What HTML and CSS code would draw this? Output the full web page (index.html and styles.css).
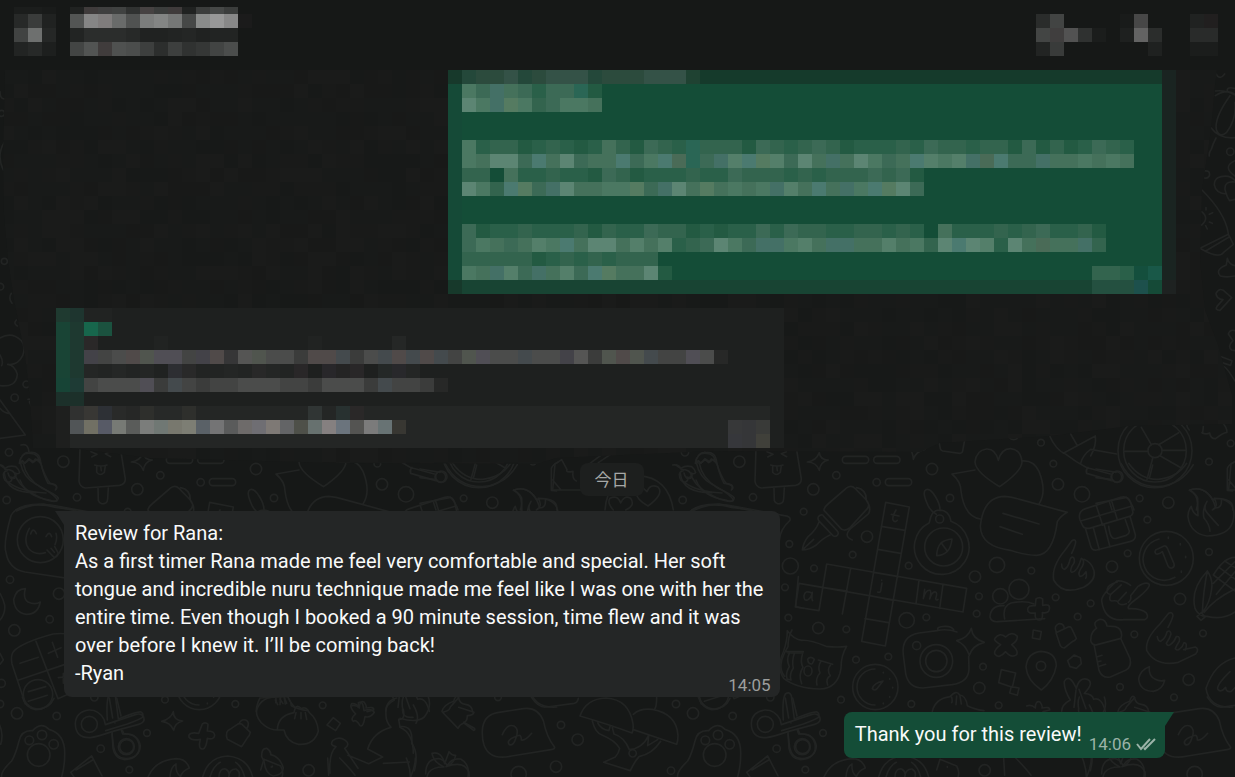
FILE: index.html
```html
<!DOCTYPE html>
<html lang="ja">
  <head>
    <meta charset="UTF-8" />
    <meta name="viewport" content="width=device-width, initial-scale=1.0" />
    <title>Chat</title>
    <link rel="stylesheet" href="styles.css">
  </head>
  <body>
    <div class="chat">
      <!-- doodle wallpaper, repeats every 676px (2028 units) -->
      <svg class="wallpaper" aria-hidden="true">
        <g transform="scale(0.33333)">
          <g id="tile">
            <!-- right block -->
            <g transform="translate(2340 1260)">
              <g id="dotsRight"></g>
              <path d="M118 98q2 22 27 22q-24 5-27 31q-8-24-36-25q26-3 36-28z" />
              <rect x="187" y="109" width="79" height="21" rx="10" />
              <rect x="281" y="109" width="79" height="21" rx="10" />
              <rect x="316" y="176" width="79" height="21" rx="10" />
              <path d="M384 84q15 9 16 34q8-25 35-30M478 70l3 16q1 5 7 7l51 7q8 0 9-7l6-33" />
              <!-- pen -->
              <path d="M132 268q3-9 12-16l57-49q13-9 24 2l34 35q12 13 3 26l-52 57q-12 11-25 5l-53-57zM128 285q-9-2-13 6q-3 7 3 13l41 43q7 5 13-1q6-6-1-14l-40-43zM117 306q-9 25-32 43q-15 19-18 41q20 0 42-15q19-20 41-30M68 389l33-31M230 203q30 6 29 38q16 22 7 40l-43 36q-40 30-6 43" />
              <!-- crossword -->
              <path d="M317 247l71 14l-72 417l-71-14zM304 319l71 12M293 388l69 12M255 596l71 12M57 490l492 86l11-71l-420-73l-23 140M57 490l-11 71l71 11M57 490l76 13M212 445l-25 137M202 513l-70-10M281 457l70 12M269 527l72 14M417 481l-9 70M489 494l-10 71" />
              <path d="M348 270q-15 26-7 33q6 4 11-2M334 283l23 5M95 519q-20-10-23 8q-1 18 12 12q11-7 13-22q-3 20 1 25M306 489l-4 24q-2 6-9 3M305 480v1M434 508l-4 28q7-28 20-25q5 3-1 26q7-24 18-21q6 3 0 20q2 7 7 2" />
              <!-- compass -->
              <circle cx="491" cy="381" r="57" />
              <circle cx="479" cy="297" r="12" />
              <path d="M448 308a82 82 0 1 0 65 -4q-6-34-35-34q-24 0-30 38zM469 283q-15-7-25-27q-19-41-6-47q13-5 29 22q14 23 13 41M470 407q1-25 13-38q12-10 33-12q-3 26-14 37q-12 12-32 13M484 369l18 25" />
              <!-- heart and chat clouds -->
              <path d="M659 200q-72-43-74-74q4-35 34-39q27-2 36 34q10-36 37-35q31 3 34 40q-1 28-67 74zM585 150l-69 12q27 23 27 51q10 77 58 84M726 123q35-3 51 31q24 60 1 96M601 319q9-89 73-90q21 1 48 10l140 38q-19 10-30 28q-13 100-62 101q-31 0-79-15q-88-11-90-72zM669 280l108 32M660 320l67 23" />
              <!-- backpack -->
              <path d="M900 300q-8-26 17-34l105-34q23-6 30 15l7 31q-2 10-13 12l-118 35q-16 2-20-8zM902 303l154-45M949 257l19 59M995 243l17 56M917 328l15 50q4 15 18 12l102-26q16-4 14-20l-16-55M940 323l18 66M973 315l17 66M986 319q3 25 10 33q4 5 13 3l30-9q12-7 8-16l-11-31" />
              <!-- rocket and wheel -->
              <path d="M806 42q22 50 52 61q27 21 64 41M850 100l96-52q4 28-14 60M872 42l20 35M902 130q6-25 30-42l78 14M925 144l66 18M920 160q-4-10 4-18M920 160l75 22" />
              <circle cx="1009" cy="171" r="16" />
              <circle cx="1125" cy="92" r="111" />
              <circle cx="1125" cy="92" r="94" />
              <circle cx="1125" cy="92" r="21" />
              <path d="M1104 94h-71M1146 91h72M1114 74l-30-52M1136 74l60-36M1119 112l-18 66M1140 107l63 36" />
              <path d="M1270 20q-2 24-4 18q12 7 23 1q3 18 18 17q20-17 34-19q0-16-16-31M1228 30q-10-11-7-20M1342 145v66l16 2M1342 145q5-12 20-18" />
              <!-- flame -->
              <path d="M1228 211q31-12 55 9q19 20 24 44q20 0 17-27q50 13 34 70q-13 40-77 41q-50-8-57-57q-1-17 10-32q4 22 20 28q-1-34-1-53q-7-15-25-23zM1281 244q-12 20 0 34q22 26 34 38M1281 244q-15 25-9 50q17 20 18 40" />
              <!-- hands -->
              <path d="M855 391l20-28q10-8 12 2q0 10-12 35M855 391q-41 49-34 89q26 47 90 22q38-21 31-50q-7-25-30-34M845 432q0 15 9 16q10-6 14-21q3-20 13-14q7 10-5 25q-7 17-1 19q17 0 29-42q12 6 3 24q-16 22-7 30q9 1 18-14q3 15-1 20" />
              <path d="M1052 496q-21-15-41-13q-46 41-46 59q8 64 67 57h62q14-6 5-20q-17-15-53-13q-8-7 27-32q37-30 35-41q-10-10-35 7l-21 27q3 13-7 20M1012 486q-28 8-30 20q-5 17 10 17q-7 19 3 20q15-2 18 2q5 14 26 6M994 522l30-27M1015 543l24-26" />
              <path d="M1140 612l26-32q12-6 13 7q-3 14-15 35M1140 612q-45 44-40 79q28 50 95 36l52-25q12-14-1-21l-35 8M1132 650q2 14 10 14q14-8 19-28q10-8 12 6q-4 14-14 28q4 10 12 4q12-8 18-24q12-3 9 14q-8 12-12 22q6 8 14 0q8-6 12-18q12 0 4 22" />
              <circle cx="1159" cy="415" r="81" />
              <path d="M1137 357a63 63 0 1 0 48 115M1127 390l25-12q6-1 10 6l20 47q3 9-6 13q-8 2-12-6l-17-43q-13 11-20 6q-4-6 0-11M1165 351v4M1201 371v4M1217 409v4M1204 453v4" />
              <!-- corn -->
              <path d="M1282 453q-51 54-37 112q11 25 36 24q49 12 84-13M1282 453q17 24 13 54q-5 42-28 71q3-65 15-125M1300 465q33-54 65-53M1273 577q29-40 92-70M1300 465l65 48M1318 443l47 34M1334 423l31 20M1309 523l56-68M1300 490l65-65M1251 589l13-11l11 13l-12 10z" />
              <!-- people -->
              <circle cx="661" cy="529" r="23" />
              <circle cx="717" cy="508" r="30" />
              <path d="M672 557q-40-2-42 34q4 16 24 14l140-9M674 597q-8-37 19-48q43-9 69 3" />
              <path d="M768 537q10-8 20 0v19q24-6 20 12q-2 13-21 10q3 23-10 22q-14-1-11-21q-23 3-23-10q0-14 23-12z" />
              <!-- camera -->
              <circle cx="469" cy="723" r="49" />
              <circle cx="469" cy="723" r="32" />
              <circle cx="410" cy="677" r="12" />
              <path d="M531 636q-28-10-57-5q-6-11 20-12q21-1 27 10M472 632l-55 7q-54 9-47 66l7 55q8 44 52 44l87-10q50-7 51-47l-1-38M574 625q3 31 39 42q-37 10-45 39q-12-34-38-44q35-8 44-37z" />
              <!-- cat -->
              <path d="M22 632q20 27 44 29q24-2 72 18q36 4 62 0q-17 27-17 66q-9 60-63 62q-72-2-109-32q-22-33-1-79q12-34 12-64zM24 699h45M83 718q8-12 20 0q-6 15-10 14q-9-2-10-14M115 720l43 13M43 700q-8 26-3 44q-13 20-7 36l-12-3M67 704q-7 22 2 38q-15 23-4 49M122 725q-10 18-2 34q-14 15-9 36M152 734q-13 16-1 33q-15 8-8 28" />
              <ellipse cx="84" cy="753" rx="12" ry="15" />
              <!-- gauge -->
              <circle cx="286" cy="801" r="68" />
              <path d="M285 747a54 54 0 1 0 0 108M309 783q-28 6-32 23q7 8 14 0zM310 757v2M329 776v2M338 802v2M329 830v2M310 849v2" />
              <path d="M645 655q13-19 32-4q19-19 35-2q1 14-17 25q21 18 15 30q-16 12-33-9q-20 23-32 8q-6-10 17-29q-23-13-17-19zM760 630l24 5l-4 23l-23-4zM664 749l43 10l-10 43l-41-14zM694 800l23 4l-5 22l-23-7zM883 705l18 8l3 18l-15 14l-19-5l-7-18z" />
              <path d="M783 694q45 3 46 43q-8 46-45 73q-43-29-46-69q4-43 45-47z" />
              <circle cx="783" cy="738" r="14" />
              <path d="M828 638l38-18q7 0 9 5l14 30q-3 7-12 10l-24 19q-8 0-12-7zM829 637q-9-19 7-26q16-1 17 15" />
              <!-- bottle -->
              <path d="M949 624q-12-17 7-25q20-4 25 19l25 2q18 4 19 26l-2 9l-80 21q-14-8-10-22q0-17 17-30zM942 673l15 78q10 25 34 20l46-20q19-10 13-36l-27-58M950 711l16-5M954 725l9-2M958 739l19-6" />
              <path d="M1108 740q-28 10-32 37q4 37 44 37q28-5 34-33q-15 4-28-3q-21-9-18-38z" />
              <path d="M1365 714q-61 14-87 91q9 60 80 56M1350 755q-39 38-37 52q8 13 24-5q1 16 17 12l14-14" />
              <!-- dumplings and bow -->
              <path d="M457 874q9-38 53-44q19-22 29-5q19 2 23 32q18 10 50 15M515 832q3 12 0 16M530 828l-2 26M540 828l4 24M740 858q14-6 26 6q0-23 14-18q9 12 6 18q25-5 23 6l-20 5M845 874q0-20 26-34q-20-33-18-56q16-25 36 22q8-35 33-28q22 10-9 42q25 2 28 18q24-8 35 36M888 810l-6 52M897 808l21 58M1014 874q6-20 35-30q6-21 14-13q4 21 21 22q20 2 22 22" />
              <!-- clothespin -->
              <path d="M10 900q-4-60 6-78q12-9 18 5l9 70q60-24 68-21q9 5 4 16q-5 5-45 20l-65 20M24 935l3 50q6 32 35 34q45-3 44-40q-4-41-50-37l-4-12" />
              <circle cx="67" cy="980" r="24" />
              <path d="M132 1071q22-51 85-55q29 0 39 28q-21 8-27 27M198 1071q2-31 18-39q-2 25 12 36M296 1071q16-60 75-63q61 5 75 63M318 1071q10-34 31-44M395 1027q19 13 27 44M345 1071q0-26 20-24q15 10 9 24q3-25 22-24q14 8 9 24" />
              <path d="M470 1050l10-32l50 20q10 18 4 33M502 1040v2M671 1014l3 52M707 1014q30 30 46 52M907 1014q12 30 12 57M934 1014q0 26-14 57M965 1062q0-46 38-46q16 0 27 22q11-25 40-21q28 15 22 54" />
            </g>

            <!-- left block -->
            <g transform="translate(0 1320)">
              <g id="dotsLeft"></g>
              <!-- chilli -->
              <path d="M63 15q22-7 24 23q33-5 35 30l-16-11l-8 11l-11-10q-10 15-22 10q-9-5 2-20q7-10 15-10M70 70q8 44 53 73q45 20 52 31q-3 16-26 6q-70-10-89-60M122 68q11 39 28 62q30 7 16 20M0 75q10 8 15 10q13-10 32-5q10 8 12 18q-4 6-14 1q7 8-2 16q-14 5-19-16M13 100q6 59 95 58" />
              <!-- popsicle -->
              <path d="M240 24l-3 100q3 17 19 20l103-8q17-4 17-19l-15-93M294 145l1 37q6 14 22 7q6-4 6-13l2-32M273 35l18 8l-16 8M331 35l-15 6l16 9M284 75q20 6 37 0M290 78v19q10 13 23 0l3-20M302 78l2 14" />
              <!-- smiley -->
              <circle cx="121" cy="299" r="69" />
              <path d="M88 265q-20 37-1 62q20 20 49 11M168 280q5 16-3 34M92 282q7-23 17-1M138 290q10-20 17 0M141 330l22 23q12-5 11-15l-10-18M153 325l10 12M230 213l-99-21q-80-2-98 35q-24 84-15 110q8 50 57 59l175 26" />
              <path d="M76 446q-27 0-35 32q2 40 38 45q35 0 42-37q-16 10-37 0q-16-11-8-40zM0 460q11 20 14 35q3 25-14 45M0 640l10 20l-10 13" />
              <!-- board -->
              <path d="M220 585q-30-7-61-3q-95 26-118 52q-10 12-5 38l40 120M108 604l66 172M56 720l137-46M174 776l30-13M60 670l55-18M157 607l16 45M145 640l38-17M85 755l52-15M85 784l57-18M175 713l18-2M190 700v30" />
              <circle cx="114" cy="763" r="44" />
              <!-- paw -->
              <path d="M5 1011q-4-16 30-48q12-20 22-60q7-33 41-31q26-28 49-4q50 14 47 78q0 33-9 65" />
              <circle cx="88" cy="901" r="13" />
              <circle cx="126" cy="885" r="14" />
              <circle cx="161" cy="913" r="14" />
              <circle cx="116" cy="945" r="34" />
              <!-- clothespin -->
              <path d="M312 838q-16-29-45-28q-39 5-41 40q0 45 45 43q18-2 65-18l80-22q21-6 15-22q-7-13-25-7l-90 30zM328 774l10 60M350 774l13 54M336 882l5 40q7 34 37 34q41-3 43-38q-6-38-49-36l-6-13M345 848v1" />
              <circle cx="268" cy="853" r="24" />
              <circle cx="380" cy="920" r="21" />
              <path d="M212 997l63-49l31 60M212 997l10 14M228 990l50-30" />
            </g>

            <!-- middle block -->
            <g transform="translate(1200 1500)">
              <path d="M131 636q19-5 20-15l25-28M176 622l46 15q-3 10-20 10q0 17-11 20l32 18q4 5-2 6l-29-22q-13 4-18 16l-47-49" />
              <!-- bubble with a signature -->
              <path d="M247 692q2-46 45-54l78-12q43-6 60 36q10 50 34 80q0 6-11 7l-118 19q-66 15-83-33q-6-18-5-43zM307 704q15-34 35-26q16 9 6 35q-7 25-20 21q-13-15 30-28q6 0 6 14q12 3 31-20" />
              <!-- mushrooms -->
              <path d="M540 648q18-52 78-54q69 4 81 77q2 19-3 28q-70-26-156-51zM700 643q20-19 57-15q73 13 77 78q0 18-4 27l-130-44M577 663q9 36 29 42q40 17 53 40q-3 15-13 26l-35 16l80 25q10-23 26-42q40-8 65-46M593 669q10 20 34 23l3-12M637 683l5 19q31 9 46 47q40-4 58-43M746 708l-3 29l30-18M770 592q0 30-7 37" />
              <path d="M394 591q22 34 47 30l82-11q10-3 12-15M895 591q9 32 40 38q41-2 55-34M0 680q40-6 35 50q22 30 8 82M10 591q-6 13-2 35q-4 29 31 26M0 655q50 15 73-4q23-30 12-60M48 670q12-20-8-55" />
              <path d="M96 760q28-8 38 31l13-36q9 12 20 11q-5 26-29 34q54-20 69 16q3 20-10 50H85q-20-66 47-65q-32-15-36-41z" />
              <path d="M877 33q60-30 126-14l150 28q20 2 17 14q-30 27-32 60" />
              <path d="M1176 390q-12 20-12 50q-37 60-10 89M1210 455h-50M1168 460q-10 18 0 40q-12 20-7 35M1195 230l-8 90l25 5" />
            </g>
            <g transform="translate(1260 900)">
              <path d="M758 495q20-3 25 13q30 0 31 20q-4 7-14 3q8 10-4 15q-17 1-18-23q4-11 12-11M826 490q4-33 33-30q25 0 30 30l-10-12l-10 8l-14-10l-12 14l-8-8zM790 545q38 30 116 34M829 488q9 45 47 65q70 38 62 50q-13 5-48-10q-54-22-75-62M890 488q9 38 22 62q31 0 24 17M398 570l7-78l20-13l16 30q-5 10 18 5q-3 24 10 29M398 570h90M398 540l25 30M510 490l54-40M535 488l55-37" />
              <path d="M555 630q8-103 100-103q90 5 105 103M580 630q-20-22-10-35q23-12 32 14q10-25 30-14q15 22-15 35M684 618q-39-23-35-44q15-20 32 1q10-25 33-14q20 20-30 57zM281 570q44-15 70 30q3-2 5-5q60 0 54 35M281 570q33 20 20 60M355 595q14 25-6 35M0 610l92-18q17 20 22 38M40 605l8 25M815 630q54-26 120-8l60 8" />
              <path d="M75 490q35 70 112 70q70-5 105-66M98 490q35 50 89 48q56-5 85-48M160 535l10-40M0 507l60 10M0 533l44 5" />
              <circle cx="64" cy="530" r="17" />
            </g>
          </g>
          <use href="#tile" x="-2028" />
          <use href="#tile" x="2028" />

          <!-- only shows left of the second tile -->
          <g transform="translate(0 1320)">
            <path d="M520 815q0 25 28 28q-24 6-27 28q-9-24-36-27q28-8 35-29zM607 852q10-7 17 1l-2 20q22 0 22 13q-2 15-22 9q-3 29-13 32q-16 1-8-29q-26 5-34-6q-4-17 29-12zM690 868l22-15q7-4 14 0l25 24q-2 10-8 15l-18 28l-43-22q-8-24 8-30zM717 852q6-16 20-12q14 6 4 26" />
            <path d="M780 774q-27 52 13 82q18 14 39 14M780 774l85-5q-4 7 22 36M832 870q1-43 50-52q5-30 22-12q15-8 24 12q24 19 27 55q-12 43-60 40q-36-8-43-43zM826 780l7 14M840 777l9 14M854 775l6 15M888 818l-4 18M903 818v18M916 818l4 20" />
            <path d="M1000 833l21 17l-14 22l-26-17zM1075 788q14-8 17 24q23-8 31 5q-12 18-28 13q-5 33-15 27q-11-20-20-13q-10-7 7-22q-20-20-12-31q13-2 22 11zM1190 774q-36 8-32 50q-1 20 15 38q-54 14-70 65l45 24l-42 20l-62-25M1240 940q0-60-40-78l-4-24q20 4 14-30M1150 970l78-4M990 1000q-4-60 18-80q-20-4-10-18q18-15 38-1q16 12-2 24l40 60M785 950q-1-26 15-25q14 9 12 19q28 6 38 40q-1 20-30 24q-24-6-28-45zM817 978v2" />
          </g>

          <!-- right edge beside the upper messages -->
          <g transform="translate(2400 180)">
            <path d="M1248 42q12 20 26 0M1246 93q29-4 59 12M1246 107q35-22 59-4M1283 95q-6-16 20-10M1290 107q-50 70-40 105q10 22 30 5q30-40 25-90M1233 203q25 34 72 30M1248 234q-10 19-14 34q-8 10-6 20M1243 375q0-30 42-26q10 2 20 12M1243 375q4 26 37 27M1305 366q-32-4-30 22q6 24 14 34l16-4M1206 390q70 70 79 130M1200 565l85-42q6 10 15 30l-30 25q-15 20-70-13M1216 574l70-42M1205 455q24 20 0 40M1218 443v7M1238 458l-10 5M1237 490l-9-4M1222 507l-5-10M1282 595l-3 20q-35 14-18 33q20 5 44 0M1282 595q6 20 23 22M1248 700q12-22 30-2l17 15l-35 38q-16 0-9-12l18-20q-20-2-21-19zM1305 302q-40 18 0 46" />
            <circle cx="1291" cy="275" r="11" />
            <path d="M1214 333q18-2 14 15q-5 8-14 6M1305 812q-15-5-20 10l14 20q-18 18-4 28l10 2M1264 890l32 12l-4 14l-26-8M1268 918q10 0 37 45" />
          </g>
          <!-- left edge beside the quoted message -->
          <g transform="translate(0 180)">
            <path d="M0 95q0 22 14 22M14 245q-26 40-4 85M0 834q35-20 64 8q14 15 4 45q-15 30-45 26q20 1 29 30q-3 40-52 34M0 885q11 20 5 32M0 1020l76 105l-76 10M0 1045q12 14 26 15M34 700q-10 15 2 30M49 780q-10 10 3 18M84 1018l14-2l-10 10l10 20" />
            <circle cx="5" cy="160" r="9" />
            <circle cx="13" cy="604" r="9" />
            <circle cx="1" cy="680" r="10" />
            <circle cx="79" cy="973" r="10" />
            <circle cx="44" cy="1013" r="11" />
          </g>
        </g>
      </svg>
      <svg class="veil" id="veil" aria-hidden="true"></svg>

      <header class="top-bar">
        <svg class="mosaic avatar" id="avatar" aria-hidden="true"></svg>
        <svg class="mosaic contact" id="contact" aria-hidden="true"></svg>
        <nav class="actions">
          <button type="button" aria-label="Call"><svg class="mosaic" id="call"></svg></button>
          <button type="button" aria-label="Search"><svg class="mosaic" id="search"></svg></button>
          <button type="button" aria-label="Menu"><svg class="mosaic" id="menu"></svg></button>
        </nav>
      </header>

      <main class="messages">
        <svg class="mosaic sent-hidden" id="sentHidden" aria-hidden="true"></svg>
        <svg class="mosaic received-hidden" id="receivedHidden" aria-hidden="true"></svg>

        <div class="date">今日</div>

        <article class="bubble received">
          <p>Review for Rana:<br>
            As a first timer Rana made me feel very comfortable and special. Her soft tongue and incredible nuru technique made me feel like I was one with her the entire time. Even though I booked a 90 minute session, time flew and it was over before I knew it. I’ll be coming back!<br>
            -Ryan</p>
          <time>14:05</time>
        </article>

        <article class="bubble sent">
          <p>Thank you for this review!</p>
          <div class="meta">
            <time>14:06</time>
            <svg class="ticks" viewBox="0 0 20 13" aria-hidden="true">
              <path d="M1 6l4 5l9-10M8 10l1 1l10-10" />
            </svg>
          </div>
        </article>
      </main>
    </div>
    <script src="script.js"></script>
  </body>
</html>
```
FILE: styles.css
```css
* {
  box-sizing: border-box;
}

body {
  margin: 0;
  background-color: #161817;
  color: #f9fafa;
  font-family: Roboto, "Noto Sans CJK JP", sans-serif;
  font-size: 20px;
  line-height: 28px;
}

.chat {
  position: relative;
  min-height: 100vh;
  overflow: hidden;
}

/* Wallpaper */
.wallpaper,
.veil {
  position: absolute;
  top: 0;
  left: 0;
  width: 100%;
  height: 100%;
}

.wallpaper {
  fill: none;
  stroke: #222423;
  stroke-width: 5;
  stroke-linecap: round;
  stroke-linejoin: round;
}

/* Header */
.top-bar {
  position: relative;
  display: flex;
  align-items: flex-start;
  height: 70px;
  padding: 7px 17px 0 14px;
  background-color: #161817;
}

.mosaic {
  display: block;
  flex: none;
}

.contact {
  margin-left: 14px;
}

.actions {
  display: flex;
  gap: 14px;
  margin-left: auto;
}

.actions button {
  padding: 0;
  border: 0;
  background: none;
  cursor: pointer;
}

/* Messages */
.messages {
  position: relative;
  display: flex;
  flex-direction: column;
  align-items: flex-start;
  gap: 15px;
  padding: 0 70px 19px 64px;
}

.sent-hidden {
  align-self: flex-end;
  margin-right: -11px;
  margin-bottom: -1px;
}

.received-hidden {
  margin-left: -8px;
}

.date {
  align-self: center;
  margin-right: 6px;
  padding: 2px 15px 3px;
  border-radius: 8px;
  background-color: #1d1f1e;
  color: #a6a8a7;
  font-family: "Noto Sans CJK JP", sans-serif;
  font-size: 17px;
}

.bubble {
  position: relative;
  max-width: 65%;
  padding: 8px 9px 10px 11px;
  border-radius: 8px;
}

.bubble p {
  margin: 0;
}

.bubble time {
  color: #9c9e9d;
  font-size: 17px;
  line-height: 20px;
}

.bubble::before {
  content: "";
  position: absolute;
  top: 0;
  width: 18px;
  height: 14px;
  background-color: inherit;
}

.received {
  display: grid;
  border-top-left-radius: 0;
  background-color: #242626;
}

.received::before {
  left: -9px;
  clip-path: polygon(0 0, 100% 0, 100% 100%, 9px 100%);
}

/* The time shares the cell of the text, in its lower right corner */
.received p,
.received time {
  grid-area: 1 / 1;
}

.received time {
  place-self: end;
  margin-bottom: -8px;
}

.sent {
  display: flex;
  align-items: flex-end;
  align-self: flex-end;
  gap: 7px;
  border-top-right-radius: 0;
  background-color: #144d37;
}

.sent::before {
  right: -9px;
  clip-path: polygon(0 0, 100% 0, 9px 100%, 0 100%);
}

.meta {
  display: flex;
  align-items: center;
  gap: 5px;
  margin-bottom: -6px;
}

.sent time {
  color: #9bb3a8;
}

.ticks {
  width: 20px;
  height: 13px;
  fill: none;
  stroke: #9bb3a8;
  stroke-width: 2;
}
```
FILE: script.js
```javascript
const CELL = 14;
const SVG_NS = "http://www.w3.org/2000/svg";

const green = {
  a: "#235a42", b: "#2a6049", c: "#33644e", d: "#3c6a56", e: "#45715b",
  f: "#4b7862", g: "#547f6a", h: "#5c8573", m: "#4a6b57", o: "#557b61",
  s: "#447066", t: "#4b7a70", u: "#2a6655",
  k: "#153a2b", 0: "#17392b", 1: "#154a37", 2: "#184433", x: "#1a2421",
  y: "#1e2221", A: "#24483a", B: "#2c4b3d", C: "#345247", D: "#1f4232",
  E: "#144f3d", F: "#195848", G: "#1d504c", H: "#245040",
};

const grey = {
  1: "#272827", 2: "#303130", 3: "#3b3c3b", 4: "#434443", 5: "#4b4c4b",
  6: "#555554", p: "#434248", r: "#504a49", v: "#50554e", y: "#504e55",
  q: "#444a4d", n: "#363637",
};

// A row is one letter for each cell, or colours with spaces between them
const mosaics = {
  avatar: {
    top: 7, cols: 3, rows: [
      "#1b1d1c #1b1d1c #191b1a", "#272928 #3a3c3b #202221",
      "#414342 #6e706f #252726", "#222423 #272928 #1d1f1e",
    ],
  },
  contact: {
    top: 7, cols: 13, rows: [
      "#202221 #3f3b3b #3f3f3f #404241 #303231 #464242 #3b3d3c #3f3b3b #202221 #3b3d3c #464847 #3b3d3c",
      "#535554 #858585 #7f7c7c #696b6a #505251 #7b7d7c #838584 #757776 #464847 #898b8a #989898 #888888 #1b1b1b",
      "#222423 #2b2d2c #2b2d2c #2b2d2c #272928 #202221 #202221 #222423 #242625 #202221 #222423 #222423",
      "#434544 #525453 #403c3c #4f5150 #4b4d4c #3d3f3e #2c2e2d #3d3f3e #303231 #353736 #424443 #4b4d4c",
    ],
  },
  call: {
    top: 7, cols: 5, rows: [
      ".....", "#2a2c2b #424443", "#434544 #403e3e #525252 #2f3130 #1b1d1c", "#222423 #393b3a",
    ],
  },
  search: {
    top: 7, cols: 4, rows: [
      "....", "#191b1a #474747", "#1e201f #636363 #2b2d2c", ". . #1f2120",
    ],
  },
  menu: {
    top: 7, cols: 2, rows: [
      "..", "#202221 #211f1f", "#292b2a #292b2a", "#1b1d1c #1b1d1c",
    ],
  },
  sentHidden: {
    cols: 52, palette: green, base: "#144d37", rows: [
      "0ABBCABCCCABBBCCCD" + "k".repeat(33) + "x",
      "1fdsedbddua" + ".".repeat(40) + "x",
      "1hfsofcdffe" + ".".repeat(40) + "x",
      "1" + ".".repeat(50) + "x",
      "1" + ".".repeat(50) + "x",
      "1fbccabcbabecadcbucccadcbcdcabbbcbdccbccadacabdcb..x",
      "1fehhdtehdeetdftmudsgtogdhesehfdetgfgsmtddseefefe..x",
      "1cc.ebbcbbadcabbbcbbdcccbcbcccdcda" + ".".repeat(17) + "x",
      "1hfctodsheeffodsheoefefsgetesftohd" + ".".repeat(17) + "x",
      "1" + ".".repeat(50) + "x",
      "1" + ".".repeat(50) + "x",
      "1dabbcbbbcacbbdccababbdbdccbbccbcb.ebbbcbcdbbca....x",
      "1dfedegftehhegegbcdhfdssfgesseegefchthgbhemeesc....x",
      "1cccccabcbcbccc" + ".".repeat(36) + "x",
      "1fesgdsegdtoeeha" + ".".repeat(30) + "ccbEFx",
      "0" + "2".repeat(45) + "HHHG1y",
    ],
  },
  receivedHidden: {
    cols: 52, palette: grey, base: "#1e201f", rows: [
      "#1f3a30 #1e352f #212322 #212322",
      "#194435 #1e3930 #17664c #1b523f",
      "#194435 #1e3930 #2a2828 . . . . #212322 . . . . . . . . . . #212322 . . . . . #252726",
      "#194435 #1e3930 p 4 5 r v y y 4 p r n 6 v 5 5 3 r r q 3 5 q r q r q 4 v y 5 5 q 5 5 p 6 3 v r v q 4 4 y 5 1",
      "#194435 #1e3930 #242625 #222423 #252726 #222423 #242625 #202221 #2d2e32 #292929 #222423 #222423 #242625 #222423 #282828 #242625 #222423 #292728 . #28272a #242424 #292728 . #242827 #28282b #242625",
      "#174436 #1e3b35 4 5 5 5 y 3 q 4 3 4 4 5 5 5 4 4 3 5 5 5 3 q 4 4 3 1",
      "#1c302a #1c302a",
      "#1e1f1e #303130 #383734 #2d3035 #292a29 #262726 #2e2f2c #272928 #272928 #2e2f2c" + " #242625".repeat(8) + " #303534 #242625 #283130 #2a2828" + " #242625".repeat(29),
      "#1e1f1e #515557 #717064 #575a66 #777a75 #5a5c5a #7b7d7b #707874 #78786e #7d7e74 #5a6167 #747475 #5a5b5b #6e6b6a #6f6e73 #7e7975 #636466 #4e5049 #67716f #858080 #6b747d #545452 #7b7b7b #687374 #383732" + " #242625".repeat(23) + " #373839 #353638 #393a38",
      "#1e1f1e" + " #242625".repeat(47) + " #36373b #353638 #40403a",
    ],
  },
};

function addRect(parent, x, y, width, height, fill) {
  const rect = document.createElementNS(SVG_NS, "rect");
  rect.setAttribute("x", x);
  rect.setAttribute("y", y);
  rect.setAttribute("width", width);
  rect.setAttribute("height", height);
  rect.setAttribute("fill", fill);
  parent.appendChild(rect);
}

Object.entries(mosaics).forEach(([id, { cols, rows, palette = {}, base, top = 0 }]) => {
  const svg = document.getElementById(id);
  const width = cols * CELL;
  const height = rows.length * CELL - top;
  svg.setAttribute("width", width);
  svg.setAttribute("height", height);
  svg.setAttribute("viewBox", `0 ${top} ${width} ${height}`);
  svg.setAttribute("shape-rendering", "crispEdges");

  if (base) {
    addRect(svg, 0, 0, width, height, base);
  }
  rows.forEach((row, y) => {
    const cells = row.includes(" ") ? row.split(" ") : [...row];
    cells.forEach((cell, x) => {
      if (cell !== ".") {
        addRect(svg, x * CELL, y * CELL, CELL, CELL, palette[cell] || cell);
      }
    });
  });
});

// Faint squares behind the hidden messages
const veil = document.getElementById("veil");
veil.innerHTML = `
  <clipPath id="veilShape">
    <polygon points="5,70 3,160 4,215 8,260 14,300 25,355 30,400 33,448 70,448 150,458
      340,463 537,464 556,458 714,451 920,452 940,443 1050,436 1130,426 1232,424
      1232,395 1218,345 1205,310 1200,260 1202,190 1211,130 1215,85 1217,70" />
  </clipPath>
  <g clip-path="url(#veilShape)" shape-rendering="crispEdges"></g>`;
const veilCells = veil.querySelector("g");
const shades = ["#171918", "#181a19", "#191a19", "#181918", "#181a19", "#1a1b1a"];
let seed = 7;
for (let y = 70; y < 476; y += CELL) {
  for (let x = 0; x < 1235; x += CELL) {
    seed = (seed * 16807) % 2147483647;
    addRect(veilCells, x, y, CELL, CELL, shades[seed % shades.length]);
  }
}

// Small rings between the doodles: x, y, radius
const dotsRight = [
  [169, 166, 11], [290, 187, 11], [100, 208, 17], [71, 275, 10], [456, 147, 17],
  [510, 234, 11], [261, 350, 17], [28, 372, 10], [31, 438, 24], [102, 445, 10],
  [218, 404, 10], [386, 437, 10], [15, 502, 10], [25, 593, 10], [115, 624, 17],
  [199, 628, 10], [228, 719, 10], [325, 710, 10], [439, 592, 10], [380, 601, 23],
  [585, 470, 17], [597, 529, 10], [590, 581, 10], [609, 740, 10], [598, 804, 17],
  [651, 435, 23], [754, 452, 10], [827, 532, 10], [932, 550, 10], [893, 590, 10],
  [996, 440, 17], [1043, 400, 10], [1102, 299, 10], [1079, 235, 10], [1165, 248, 17],
  [1287, 125, 10], [1352, 70, 10], [783, 68, 10], [820, 131, 10], [834, 193, 17],
  [906, 223, 23], [1287, 396, 10], [1200, 537, 17], [1269, 640, 10], [1063, 643, 10],
  [1226, 779, 17], [1182, 832, 10], [1020, 801, 10], [656, 856, 10], [394, 852, 10],
  [183, 839, 10], [129, 939, 10], [76, 1049, 10], [614, 1051, 17], [1244, 1062, 23],
  [701, 42, 17],
];
const dotsLeft = [
  [27, 37, 11], [190, 65, 17], [20, 180, 11], [231, 172, 11], [30, 419, 11],
  [177, 461, 17], [149, 538, 11], [43, 571, 17], [4, 730, 12], [0, 792, 11],
  [51, 820, 17], [170, 828, 11], [283, 772, 11], [302, 926, 11],
  [-130, 940, 11], [-345, 855, 11], [-295, 899, 17], [-360, 980, 17], [-15, 992, 11],
];

function addDots(id, dots) {
  const group = document.getElementById(id);
  dots.forEach(([cx, cy, r]) => {
    const circle = document.createElementNS(SVG_NS, "circle");
    circle.setAttribute("cx", cx);
    circle.setAttribute("cy", cy);
    circle.setAttribute("r", r);
    group.appendChild(circle);
  });
}

addDots("dotsRight", dotsRight);
addDots("dotsLeft", dotsLeft);
```
